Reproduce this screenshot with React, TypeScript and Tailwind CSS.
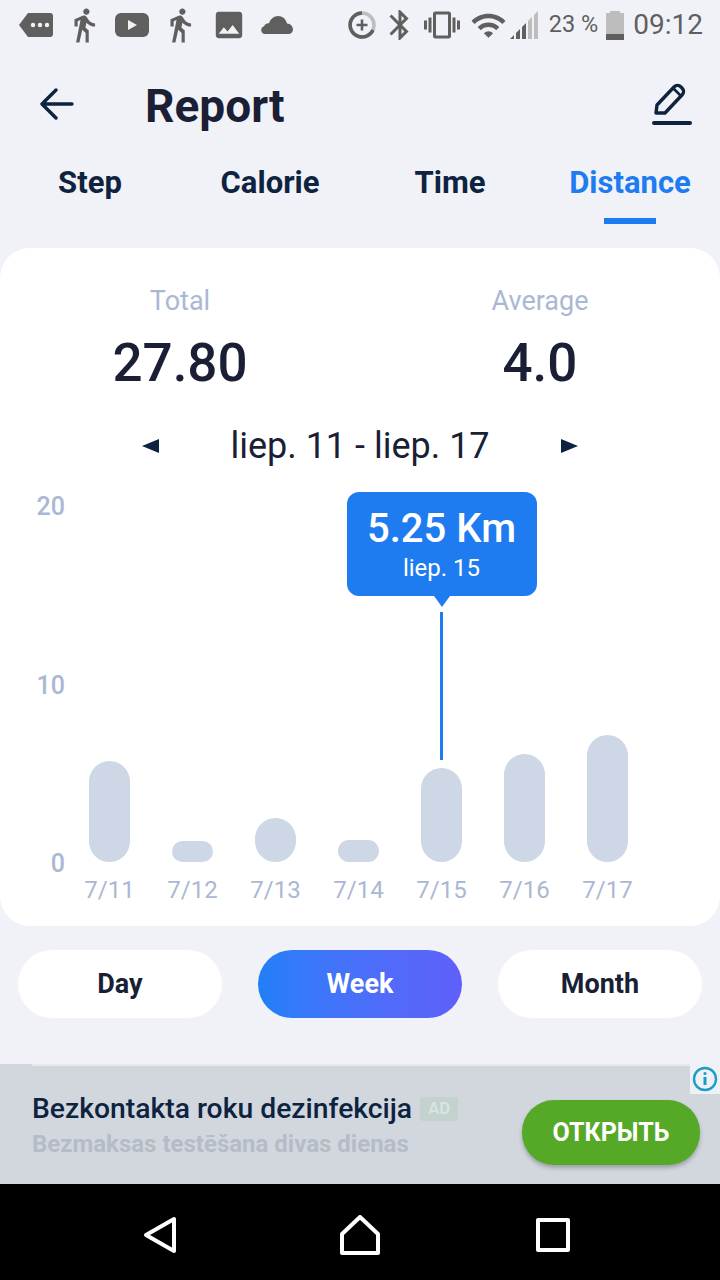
import React from "react";
import { MdDirectionsWalk, MdImage, MdBluetooth, MdVibration, MdWifi } from "react-icons/md";

const bars = [
  { label: "7/11", h: 101 },
  { label: "7/12", h: 21 },
  { label: "7/13", h: 44 },
  { label: "7/14", h: 22 },
  { label: "7/15", h: 94, active: true },
  { label: "7/16", h: 108 },
  { label: "7/17", h: 127 },
];

function StatusBar() {
  return (
    <div className="h-[52px] pb-[2px] flex items-center text-[#5f5f5f] relative">
      <div className="flex items-center">
        <svg width="34" height="26" viewBox="0 0 34 26" className="ml-[19px]" fill="currentColor">
          <path d="M9 1h22a3 3 0 0 1 3 3v18a3 3 0 0 1-3 3H9L0 13z" />
          <circle cx="14" cy="13" r="2.2" fill="#f0f2f7" />
          <circle cx="21" cy="13" r="2.2" fill="#f0f2f7" />
          <circle cx="28" cy="13" r="2.2" fill="#f0f2f7" />
        </svg>
        <MdDirectionsWalk size={38} className="ml-[12px]" />
        <svg width="34" height="24" viewBox="0 0 34 24" className="ml-[12px]" fill="currentColor">
          <rect x="0" y="0" width="34" height="24" rx="6" />
          <path d="M13 7l9 5-9 5z" fill="#f0f2f7" />
        </svg>
        <MdDirectionsWalk size={38} className="ml-[12px]" />
        <MdImage size={32} className="ml-[14px] scale-110" />
        <svg width="32" height="18" viewBox="0 0 32 18" className="ml-[16px]" fill="currentColor">
          <path d="M4 18a4 4 0 0 1-1-7.8C4 8 6 7 8 7.3 9.500 3 13 0 17 0c4.500 0 8 3 9 7.500 3.300.3 6 2.500 6 6 0 2.500-2 4.500-4.500 4.500z" />
        </svg>
      </div>
      <div className="ml-auto flex items-center">
        <svg width="30" height="30" viewBox="0 0 30 30" fill="none">
          <circle cx="15" cy="15" r="12" stroke="#bdbdbd" strokeWidth="3.5" />
          <path d="M15 3a12 12 0 1 0 11 17" stroke="#5f5f5f" strokeWidth="3.5" />
          <path d="M15 9.500v11M9.500 15h11" stroke="#5f5f5f" strokeWidth="2.6" />
        </svg>
        <MdBluetooth size={36} className="ml-[5px]" />
        <MdVibration size={36} className="ml-[6px]" />
        <MdWifi size={37} className="ml-[10px]" />
        <svg width="28" height="28" viewBox="0 0 28 28" className="ml-[3px]">
          <path d="M0 28l4-4v4zM6 28v-6l4-4v10zM12 28V16l4-4v16z" fill="#5f5f5f" />
          <path d="M18 28V10l4-4v22zM24 28V4l4-4v28z" fill="#bdbdbd" />
        </svg>
        <span className="ml-[11px] text-[23.5px] leading-none">23 %</span>
        <svg width="18" height="29" viewBox="0 0 18 29" className="ml-[8px]">
          <path d="M4 0h10v2h4v27H0V2h4z" fill="#bdbdbd" />
          <rect x="0" y="23" width="18" height="6" fill="#5f5f5f" />
        </svg>
        <span className="ml-[9px] mr-[17px] text-[28px] leading-none">09:12</span>
      </div>
    </div>
  );
}

function Header() {
  return (
    <div className="h-[104px] flex items-center pl-[40px] pr-[28px]">
      <svg width="34" height="32" viewBox="0 0 34 32" fill="none" stroke="#0d2340" strokeWidth="3.4" strokeLinecap="round" strokeLinejoin="round">
        <path d="M32 16H3M16 2L2 16l14 14" />
      </svg>
      <h1 className="ml-[71px] mt-[4px] text-[46px] leading-none font-bold text-[#1a1f36]">Report</h1>
      <svg width="40" height="42" viewBox="0 0 40 42" fill="none" stroke="#0d2340" strokeWidth="3.4" strokeLinecap="round" strokeLinejoin="round" className="ml-auto">
        <path d="M4 30l1-8L22 4c2-2 5-2 7 0l1 1c2 2 2 5 0 7L13 30z" />
        <path d="M22 6l7 7" strokeWidth="2.6" />
        <path d="M2 40h36" strokeWidth="4" />
      </svg>
    </div>
  );
}

function Tabs() {
  const tabs = ["Step", "Calorie", "Time", "Distance"];
  return (
    <div className="grid grid-cols-4 h-[92px]">
      {tabs.map((t) => {
        const on = t === "Distance";
        return (
          <div key={t} className="flex flex-col items-center">
            <span className={`h-[54px] flex items-center text-[31px] font-bold ${on ? "text-[#1f7cf0]" : "text-[#0d2340]"}`}>{t}</span>
            {on && <div className="w-[52px] h-[6px] mt-[8px] bg-[#1f7cf0]" />}
          </div>
        );
      })}
    </div>
  );
}

function Chart() {
  return (
    <div className="relative flex h-[426px]">
      <div className="w-[68px] h-[387px] pr-[3px] flex flex-col justify-between items-end text-[25px] leading-[30px] font-medium text-[#aab8d3]">
        <span>20</span>
        <span>10</span>
        <span>0</span>
      </div>
      <div className="w-[581px] grid grid-cols-7">
        {bars.map((b) => (
          <div key={b.label} className="relative flex flex-col items-center justify-end">
            <div className="w-[41px] bg-[#cdd7e6] rounded-[20.5px]" style={{ height: b.h }} />
            <span className="h-[56px] flex items-center text-[24px] text-[#aab8d3]">{b.label}</span>
            {b.active && (
              <div className="absolute left-1/2 -translate-x-1/2 top-0 flex flex-col items-center">
                <div className="w-[190px] h-[104px] rounded-[12px] bg-[#1f7cf0] text-white flex flex-col items-center">
                  <span className="mt-[15px] text-[40px] leading-[44px] font-medium">5.25 Km</span>
                  <span className="mt-[2px] text-[24px] leading-[30px]">liep. 15</span>
                </div>
                <div className="w-0 h-0 border-l-[8px] border-r-[8px] border-t-[11px] border-l-transparent border-r-transparent border-t-[#1f7cf0]" />
                <div className="w-[3px] h-[148px] mt-[5px] bg-[#1f7cf0]" />
              </div>
            )}
          </div>
        ))}
      </div>
    </div>
  );
}

function Card() {
  return (
    <div className="h-[678px] rounded-[30px] bg-white flex flex-col">
      <div className="grid grid-cols-2 pt-[37px]">
        {[["Total", "27.80"], ["Average", "4.0"]].map(([l, v]) => (
          <div key={l} className="flex flex-col items-center">
            <span className="text-[27px] leading-[32px] text-[#aab8d3]">{l}</span>
            <span className="mt-[16px] text-[53px] leading-[60px] font-medium text-[#1a1f36]">{v}</span>
          </div>
        ))}
      </div>
      <div className="mt-[30px] h-[46px] flex items-center justify-center relative text-[36px] text-[#1a1f36]">
        <span className="w-[436px] flex items-center justify-between">
          <span className="w-0 h-0 border-t-[7px] border-b-[7px] border-r-[17px] border-t-transparent border-b-transparent border-r-[#0d2340]" />
          <span>liep. 11 - liep. 17</span>
          <span className="w-0 h-0 border-t-[7px] border-b-[7px] border-l-[17px] border-t-transparent border-b-transparent border-l-[#0d2340]" />
        </span>
      </div>
      <div className="mt-[23px]">
        <Chart />
      </div>
    </div>
  );
}

function Periods() {
  return (
    <div className="flex justify-between px-[18px] pt-[24px] h-[138px]">
      <div className="w-[204px] h-[68px] rounded-[34px] bg-white flex items-center justify-center text-[27px] font-bold text-[#1a1f36]">Day</div>
      <div className="w-[204px] h-[68px] rounded-[34px] bg-gradient-to-r from-[#1f7ff8] to-[#5f5ffa] flex items-center justify-center text-[27px] font-bold text-white">Week</div>
      <div className="w-[204px] h-[68px] rounded-[34px] bg-white flex items-center justify-center text-[27px] font-bold text-[#1a1f36]">Month</div>
    </div>
  );
}

function Ad() {
  return (
    <div className="relative h-[120px] bg-[#d2d7de] flex items-center pl-[32px] pr-[20px]">
      <div className="absolute left-[32px] right-[30px] top-0 h-[2px] bg-[#e6e8ec]" />
      <div className="absolute right-0 top-0 w-[30px] h-[30px] bg-[#eef1f5] flex items-center justify-center">
        <svg width="26" height="26" viewBox="0 0 26 26" fill="none" stroke="#1b9dc4" strokeWidth="2.4">
          <circle cx="13" cy="13" r="11" />
          <path d="M13 11v8" strokeWidth="3" />
          <circle cx="13" cy="7.500" r="1.6" fill="#1b9dc4" stroke="none" />
        </svg>
      </div>
      <div className="flex flex-col mt-[5px]">
        <div className="flex items-center">
          <span className="text-[28.3px] leading-[34px] font-medium text-[#0d2340]">Bezkontakta roku dezinfekcija</span>
          <span className="ml-[8px] w-[38px] h-[24px] rounded-[3px] bg-[#c3d1cf] text-[#d8e2e0] text-[17px] font-bold flex items-center justify-center">AD</span>
        </div>
        <span className="text-[24px] leading-[36px] font-bold text-[#b6bcc6]">Bezmaksas testēšana divas dienas</span>
      </div>
      <div className="ml-auto w-[178px] h-[65px] self-start mt-[36px] rounded-[32px] bg-[#55a926] shadow-[0_3px_4px_rgba(0,0,0,0.25)] flex items-center justify-center text-[25px] font-bold text-white">ОТКРЫТЬ</div>
    </div>
  );
}

function NavBar() {
  return (
    <div className="h-[96px] bg-black flex items-start pl-[143px] pt-[32px]">
      <svg width="34" height="38" viewBox="0 0 34 38" fill="none" stroke="#fff" strokeWidth="4" strokeLinejoin="round">
        <path d="M31 3v32L3 19z" />
      </svg>
      <svg width="40" height="40" viewBox="0 0 40 40" fill="none" stroke="#fff" strokeWidth="4" strokeLinejoin="round" className="ml-[163px] mt-[-1px]">
        <path d="M2 38V19L20 2l18 17v19z" />
      </svg>
      <svg width="34" height="34" viewBox="0 0 34 34" fill="none" stroke="#fff" strokeWidth="4" strokeLinejoin="round" className="ml-[156px] mt-[2px]">
        <rect x="2" y="2" width="30" height="30" />
      </svg>
    </div>
  );
}

export default function App() {
  return (
    <div className="w-[720px] h-[1280px] bg-[#f0f2f7] overflow-hidden flex flex-col font-['Roboto',sans-serif]">
      <StatusBar />
      <Header />
      <Tabs />
      <Card />
      <Periods />
      <Ad />
      <NavBar />
    </div>
  );
}
